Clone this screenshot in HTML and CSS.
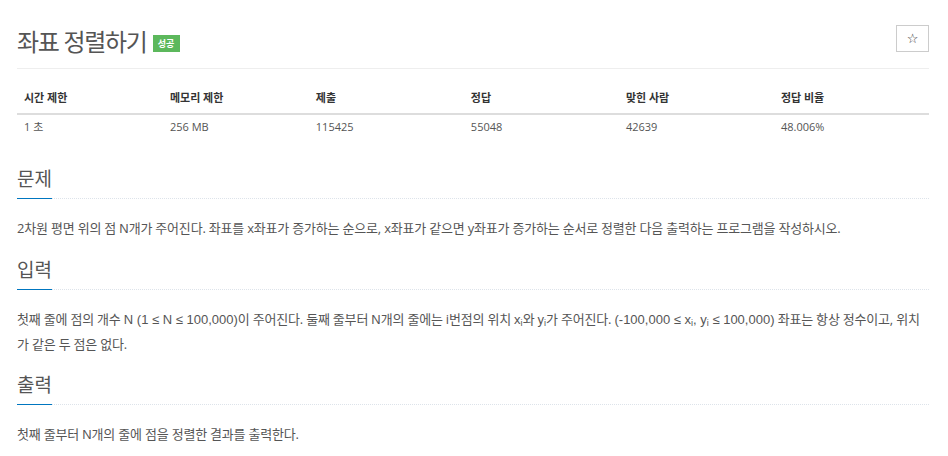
FILE: index.html
```html
<!DOCTYPE html>
<html lang="ko">

<head>
    <meta charset="UTF-8">
    <meta name="viewport" content="width=device-width, initial-scale=1.0">
    <title>좌표 정렬하기</title>
    <link rel="stylesheet" href="styles.css">
</head>

<body>
    <div class="container">
        <div class="page_header">
            <h1>
                <span class="problem_title">좌표 정렬하기</span>
                <span class="label_success">성공</span>
            </h1>
            <button class="star_btn">☆</button>
        </div>

        <table class="problem_info">
            <thead>
                <tr>
                    <th class="w16">시간 제한</th>
                    <th class="w16">메모리 제한</th>
                    <th class="w17">제출</th>
                    <th class="w17">정답</th>
                    <th class="w17">맞힌 사람</th>
                    <th class="w17">정답 비율</th>
                </tr>
            </thead>
            <tbody>
                <tr>
                    <td>1 초</td>
                    <td>256 MB</td>
                    <td>115425</td>
                    <td>55048</td>
                    <td>42639</td>
                    <td>48.006%</td>
                </tr>
            </tbody>
        </table>

        <section class="problem_section first">
            <div class="headline">
                <h2>문제</h2>
            </div>
            <p>2차원 평면 위의 점 <span class="math">N</span>개가 주어진다. 좌표를 x좌표가 증가하는 순으로, x좌표가 같으면 y좌표가 증가하는 순서로 정렬한 다음 출력하는 프로그램을 작성하시오.</p>
        </section>

        <section class="problem_section">
            <div class="headline">
                <h2>입력</h2>
            </div>
            <p>첫째 줄에 점의 개수 <span class="math">N (1 ≤ N ≤ 100,000)</span>이 주어진다. 둘째 줄부터 <span class="math">N</span>개의 줄에는 i번점의 위치 <span class="math">x<sub>i</sub></span>와 <span class="math">y<sub>i</sub></span>가 주어진다. <span class="math">(-100,000 ≤ x<sub>i</sub>, y<sub>i</sub> ≤ 100,000)</span> 좌표는 항상 정수이고, 위치가 같은 두 점은 없다.</p>
        </section>

        <section class="problem_section">
            <div class="headline">
                <h2>출력</h2>
            </div>
            <p>첫째 줄부터 <span class="math">N</span>개의 줄에 점을 정렬한 결과를 출력한다.</p>
        </section>
    </div>
</body>

</html>
```

FILE: styles.css
```css
* {
    padding: 0;
    margin: 0;
    box-sizing: border-box;
}

body {
    font-family: "Open Sans", "Noto Sans CJK KR", sans-serif;
    color: #555;
    background: #fff;
}

.container {
    width: 912px;
    margin-left: 17px;
}

.page_header {
    display: flex;
    justify-content: space-between;
    align-items: center;
    height: 69px;
    padding-top: 10px;
    border-bottom: 1px solid #eee;
}

.page_header h1 {
    display: flex;
    align-items: center;
    font-weight: normal;
}

.problem_title {
    font-size: 24px;
    letter-spacing: -1.3px;
    margin-top: 3px;
}

.label_success {
    margin-left: 6px;
    margin-top: 8px;
    display: inline-block;
    width: 27px;
    height: 17px;
    line-height: 17px;
    text-align: center;
    background: #5cb85c;
    color: #fff;
    font-size: 9px;
    font-weight: bold;
}

.star_btn {
    width: 33px;
    height: 27px;
    margin-bottom: 2px;
    background: #fff;
    border: 1px solid #ccc;
    color: #333;
    font-size: 13px;
    font-family: "DejaVu Sans", sans-serif;
}

.problem_info {
    width: 100%;
    margin-top: 14px;
    border-collapse: collapse;
    font-size: 11px;
    text-align: left;
}

.problem_info .w16 {
    width: 16%;
}

.problem_info .w17 {
    width: 17%;
}

.problem_info th {
    padding: 8px 8px 8px 7px;
    line-height: 14px;
    font-weight: bold;
    color: #333;
    border-bottom: 2px solid #ddd;
}

.problem_info td {
    padding: 5px 8px 5px 7px;
    line-height: 14px;
}

.problem_section {
    margin-top: 16px;
}

.problem_section.first {
    margin-top: 27px;
}

.headline {
    border-bottom: 1px dotted #dde3ea;
}

.headline h2 {
    display: inline-block;
    font-size: 19px;
    font-weight: normal;
    line-height: 26px;
    padding-bottom: 6px;
    margin-bottom: -1px;
    border-bottom: 1px solid #0076c0;
}

.problem_section p {
    margin-top: 17px;
    font-size: 13px;
    line-height: 24px;
    letter-spacing: -0.2px;
}

.math {
    font-family: "Liberation Sans", sans-serif;
    letter-spacing: 0;
}

.math sub {
    font-size: 70%;
    line-height: 0;
    vertical-align: -2px;
}
```
